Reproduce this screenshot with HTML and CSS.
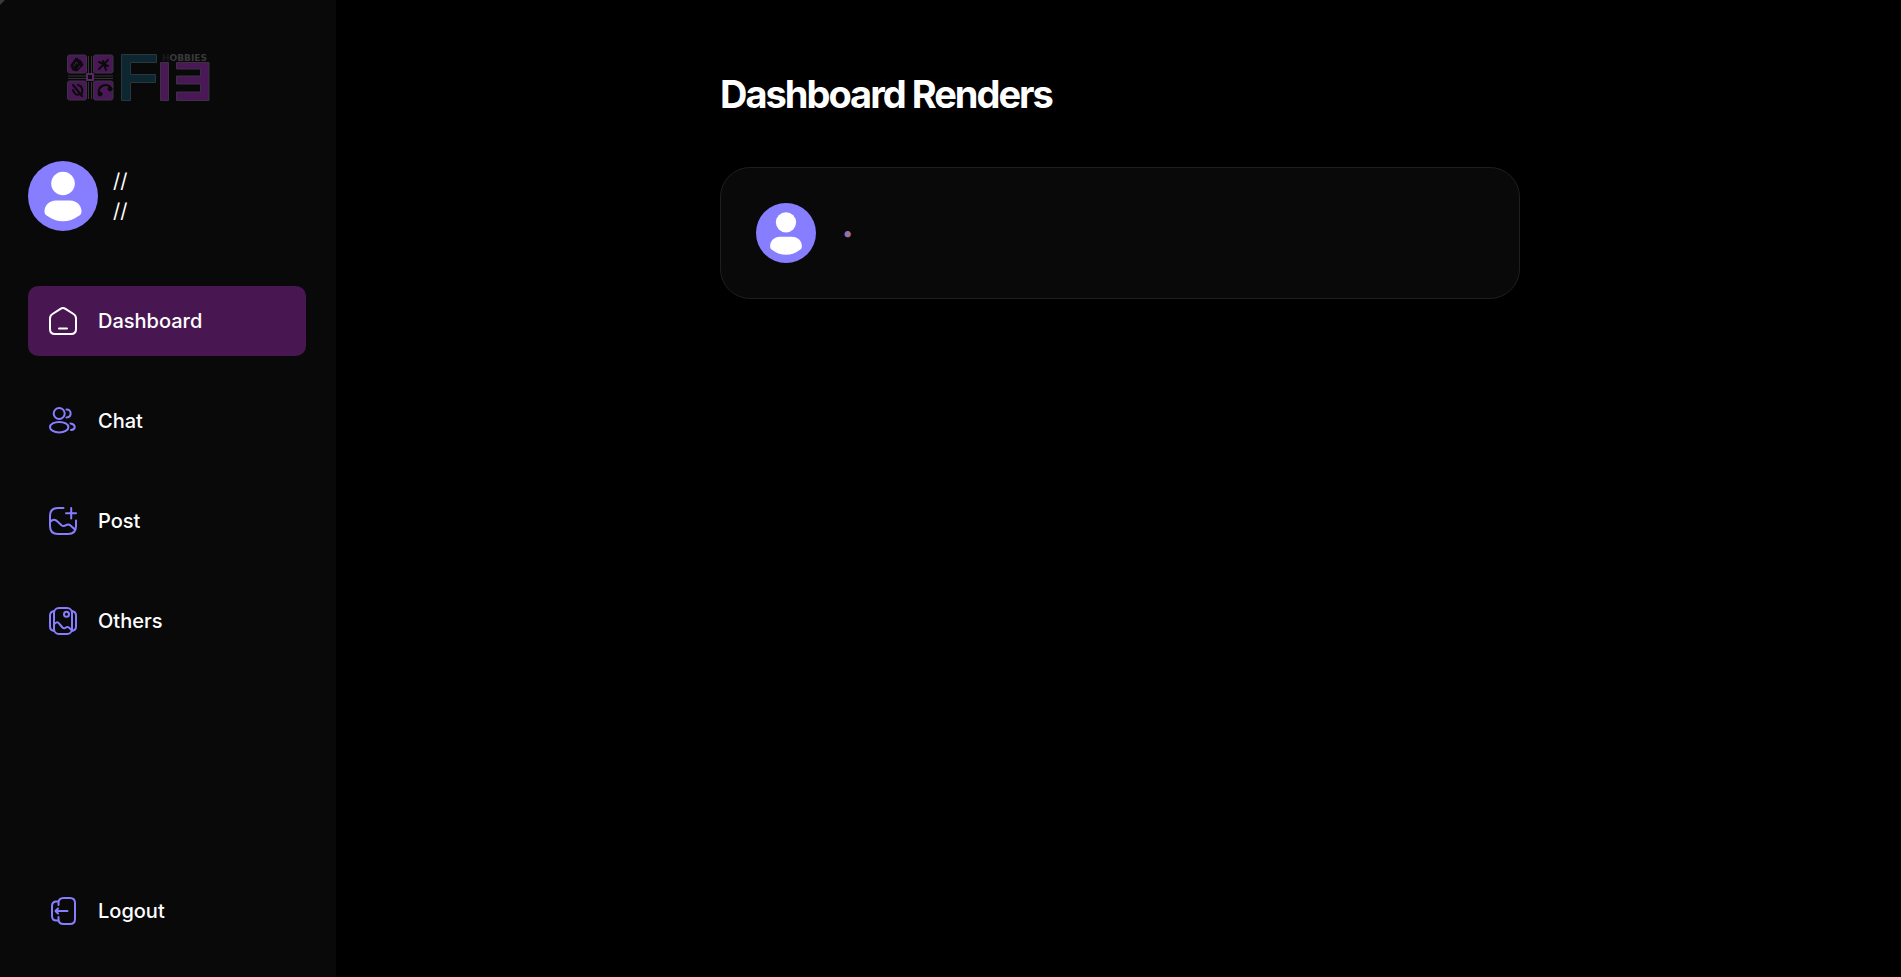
FILE: index.html
```html
<!DOCTYPE html>
<html lang="en">
<head>
<meta charset="utf-8">
<meta name="viewport" content="width=device-width, initial-scale=1">
<title>Dashboard</title>
<link rel="stylesheet" href="styles.css">
</head>
<body>
<div class="app">
  <aside class="sidebar">
    <div class="sidebar-top">
      <a class="logo" href="#" aria-label="F13 home">
        <svg width="170" height="72" viewBox="0 0 170 72">
          <g fill="#4a1856" stroke="#3b3440" stroke-width="1">
            <rect x="11.500" y="11" width="19" height="18" rx="2"/>
            <rect x="37.500" y="11" width="19.500" height="18" rx="2"/>
            <rect x="11.500" y="37" width="19" height="19" rx="2"/>
            <rect x="37.500" y="37" width="19.500" height="19" rx="2"/>
            <path d="M104.500 18.500h8v38h-8zM120.500 18.500h32.500v38h-32.500v-8.500h24v-8h-24v-8h24v-7h-24z"/>
          </g>
          <path fill="#0e2630" stroke="#26393e" d="M65.500 10.500h35v8H74.500v12h25v8H74.500v18h-9z"/>
          <path fill="none" stroke="#35303a" stroke-width="1" d="M32.500 12v17M35.500 12v17M32.500 38v17M35.500 38v17M12 32h18M12 34.500h18M38 32h19M38 34.500h19"/>
          <rect x="31" y="30" width="6" height="6" fill="#0a0a0a" stroke="#5b2669" stroke-width="2"/>
          <g fill="#0a0a0a" stroke="#0a0a0a" stroke-linecap="round">
            <path d="M15 21l5-7 5 3 2 4-6 6-4-1z"/>
            <path fill="none" stroke="#4a1856" d="M18 22l2-4 2 2M22 24l2-2"/>
            <path fill="none" stroke-width="2" d="M43 25l9-9M43 18l9 4M47 17l3 9"/>
            <path fill="none" stroke-width="2" d="M17 41l9 11M17 46c1 4 4 6 7 4M22 41c4 1 5 4 4 8"/>
            <path fill="none" stroke-width="2" d="M43 50c-2-8 8-12 12-6"/>
            <circle cx="44" cy="50" r="2"/><circle cx="54" cy="45" r="2"/>
          </g>
          <text class="logo-tag" x="106" y="17" fill="#1a1a1b">H<tspan fill="#39393b">OBBIES</tspan></text>
        </svg>
      </a>
      <a class="profile" href="#">
        <svg class="avatar avatar-lg" viewBox="0 0 70 70" aria-label="Profile"><circle cx="35" cy="35" r="35" fill="#877eff"/><circle cx="35" cy="22.500" r="11.800" fill="#fff"/><path fill="#fff" d="M28 39.500h14c7 0 11.500 5 11.500 11 0 2.500-1 3.500-3 4.500-9 7-22 7-31 0-2-1-3-2-3-4.500 0-6 4.500-11 11.500-11z"/></svg>
        <span class="profile-text"><span>//</span><span>//</span></span>
      </a>
      <nav class="nav">
        <a class="nav-link active" href="#">
          <svg class="icon" viewBox="0 0 30 30"><path d="M12.500 2.800Q15 1.200 17.500 2.800L25.500 8Q28 9.500 28 12.500V23Q28 28 23 28H7Q2 28 2 23V12.500Q2 9.500 4.500 8zM11 22.500h8"/></svg>Dashboard
        </a>
        <a class="nav-link" href="#">
          <svg class="icon" viewBox="0 0 30 30"><circle cx="11.200" cy="7.500" r="5.500"/><ellipse cx="11.200" cy="21.200" rx="9.200" ry="5.300"/><path d="M18.500 3.500c5-.3 6 7.500 0 8M22.500 17.500c5.500 1 5.500 6 .5 6.500"/></svg>Chat
        </a>
        <a class="nav-link" href="#">
          <svg class="icon" viewBox="0 0 30 30"><path d="M15.500 2H10Q2 2 2 10v10q0 8 8 8h10q8 0 8-8v-5.500M23.200 2v10.500M18 7.200h10M2 16c3-3 5-3 7.500-.5l4 3.700c1.500 1.300 3 1 4.500 0 2-1.300 3-1.200 4.500.3L27 23.500"/></svg>Post
        </a>
        <a class="nav-link" href="#">
          <svg class="icon" viewBox="0 0 30 30"><rect x="6" y="2" width="18" height="26" rx="5"/><circle cx="18.500" cy="8.200" r="2.500"/><path d="M6 5C3.500 5.500 2 7 2 9.500v11C2 23 3.500 24.500 6 25M24 5c2.500.5 4 2 4 4.500v11c0 2.500-1.500 4-4 4.500M6 18.500c2-2.500 3.500-3 5.500-.5l3 3.500c1 1 2 1.200 3.500 0 1.500-1.100 2.500-.5 5.500 2.500"/></svg>Others
        </a>
      </nav>
    </div>
    <button class="nav-link" type="button">
      <svg class="icon" viewBox="0 0 30 30"><path d="M10.500 9V7Q10.500 2 15.500 2h6.500Q27 2 27 7v16q0 5-5 5h-6.500q-5 0-5-5v-2M10.500 5.500H8.500Q4 5.500 4 10v10q0 4.500 4.500 4.500h2M19.500 15H8M10 12.500L7.500 15l2.500 2.500"/></svg>Logout
    </button>
  </aside>
  <main class="main">
    <div class="feed">
      <h1 class="title">Dashboard Renders</h1>
      <article class="card">
        <svg class="avatar avatar-md" viewBox="0 0 70 70" aria-label="Author"><circle cx="35" cy="35" r="35" fill="#877eff"/><circle cx="35" cy="22.500" r="11.800" fill="#fff"/><path fill="#fff" d="M28 39.500h14c7 0 11.500 5 11.500 11 0 2.500-1 3.500-3 4.500-9 7-22 7-31 0-2-1-3-2-3-4.500 0-6 4.500-11 11.500-11z"/></svg>
        <span class="meta">•</span>
      </article>
    </div>
  </main>
</div>
</body>
</html>
```
FILE: styles.css
```css
* { box-sizing: border-box; }
body {
  margin: 0;
  background: #000;
  color: #fff;
  font-family: Inter, "Liberation Sans", sans-serif;
}
a { color: inherit; text-decoration: none; }
.app { display: flex; min-height: 100vh; }
.sidebar {
  flex: none;
  width: 336px;
  padding: 44px 30px 31px 28px;
  background: linear-gradient(135deg, #3a3a3a 3px, #090909 4px);
  display: flex;
  flex-direction: column;
  justify-content: space-between;
}
.sidebar-top { display: flex; flex-direction: column; }
.logo { display: block; padding-left: 28px; margin-bottom: 45px; }
.logo svg { display: block; }
.logo-tag { font: 700 9px "DejaVu Sans", sans-serif; }
.profile {
  display: flex;
  align-items: center;
  gap: 15px;
  margin-bottom: 55px;
}
.avatar { display: block; flex: none; }
.avatar-lg { width: 70px; height: 70px; }
.avatar-md { width: 60px; height: 60px; }
.profile-text {
  display: flex;
  flex-direction: column;
  font-size: 20px;
  line-height: 30px;
}
.nav { display: flex; flex-direction: column; gap: 30px; }
.nav-link {
  display: flex;
  align-items: center;
  gap: 20px;
  width: 100%;
  height: 70px;
  padding: 0 20px;
  border: 0;
  border-radius: 10px;
  background: none;
  color: #fff;
  font: 500 20px/30px Inter, "Liberation Sans", sans-serif;
  cursor: pointer;
}
.active { background: #481751; }
.icon {
  width: 30px;
  height: 30px;
  fill: none;
  stroke: #877eff;
  stroke-width: 2;
  stroke-linecap: round;
  stroke-linejoin: round;
}
.active .icon { stroke: #fff; }
.main {
  flex: 1;
  display: flex;
  justify-content: center;
  padding: 68px 0 40px 3px;
}
.feed { width: 100%; max-width: 800px; }
.title {
  margin: 0 0 46px;
  font-size: 38px;
  line-height: 53px;
  font-weight: 700;
  letter-spacing: -2px;
}
.card {
  display: flex;
  align-items: center;
  gap: 26px;
  padding: 35px;
  border: 1px solid #1f1f22;
  border-radius: 30px;
  background: #090909;
}
.meta { color: #9b6fa3; font-size: 20px; line-height: 30px; }
```
